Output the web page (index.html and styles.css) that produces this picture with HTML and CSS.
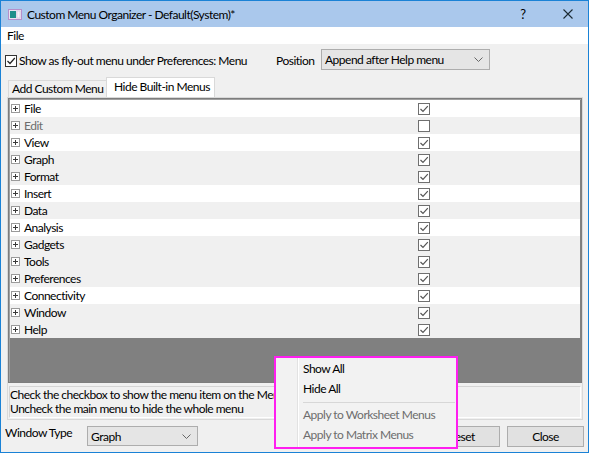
FILE: index.html
```html
<!DOCTYPE html>
<html>
<head>
<meta charset="utf-8">
<link rel="stylesheet" href="styles.css">
</head>
<body>
<div class="window">
  <div class="titlebar">
    <svg class="app-icon" width="14" height="11" viewBox="0 0 14 11">
      <rect x="0.5" y="0.5" width="13" height="10" fill="#e9e3ef" stroke="#b58fca"/>
      <rect x="2" y="2" width="6" height="7" fill="#1f8f8a"/>
      <rect x="9" y="2" width="3" height="7" fill="#f4f1f6" stroke="#c9b3d6" stroke-width="0.5"/>
    </svg>
    <span class="title">Custom Menu Organizer - Default(System)*</span>
    <span class="help">?</span>
    <svg class="close" width="10" height="10" viewBox="0 0 10 10">
      <path d="M0.5 0.5 L9.5 9.5 M9.5 0.5 L0.5 9.5" stroke="#1b2a33" stroke-width="1.1"/>
    </svg>
  </div>
  <div class="menubar">File</div>
  <div class="content">
    <div class="options">
      <label class="flyout">
        <span class="cb cb-main">
          <svg width="10" height="10" viewBox="0 0 10 10"><path d="M1.5 5 L4 7.5 L8.8 2" fill="none" stroke="#222" stroke-width="1.2"/></svg>
        </span>
        <span>Show as fly-out menu under Preferences: Menu</span>
      </label>
      <span class="pos-label">Position</span>
      <div class="select sel-position">
        <span>Append after Help menu</span>
        <svg class="chev" width="9" height="5" viewBox="0 0 9 5"><path d="M0.5 0.5 L4.5 4.5 L8.5 0.5" fill="none" stroke="#666" stroke-width="1"/></svg>
      </div>
    </div>
    <div class="tabs">
      <div class="tab">Add Custom Menu</div>
      <div class="tab active">Hide Built-in Menus</div>
    </div>
    <div class="panel">
      <div class="listbox">
        <div class="row w"><span class="plus"></span><span class="name">File</span><span class="cb cb-list on"></span></div>
        <div class="row g dis"><span class="plus"></span><span class="name">Edit</span><span class="cb cb-list"></span></div>
        <div class="row w"><span class="plus"></span><span class="name">View</span><span class="cb cb-list on"></span></div>
        <div class="row g"><span class="plus"></span><span class="name">Graph</span><span class="cb cb-list on"></span></div>
        <div class="row g"><span class="plus"></span><span class="name">Format</span><span class="cb cb-list on"></span></div>
        <div class="row w"><span class="plus"></span><span class="name">Insert</span><span class="cb cb-list on"></span></div>
        <div class="row g"><span class="plus"></span><span class="name">Data</span><span class="cb cb-list on"></span></div>
        <div class="row w"><span class="plus"></span><span class="name">Analysis</span><span class="cb cb-list on"></span></div>
        <div class="row g"><span class="plus"></span><span class="name">Gadgets</span><span class="cb cb-list on"></span></div>
        <div class="row g"><span class="plus"></span><span class="name">Tools</span><span class="cb cb-list on"></span></div>
        <div class="row g"><span class="plus"></span><span class="name">Preferences</span><span class="cb cb-list on"></span></div>
        <div class="row w"><span class="plus"></span><span class="name">Connectivity</span><span class="cb cb-list on"></span></div>
        <div class="row g"><span class="plus"></span><span class="name">Window</span><span class="cb cb-list on"></span></div>
        <div class="row g"><span class="plus"></span><span class="name">Help</span><span class="cb cb-list on"></span></div>
        <div class="list-fill"></div>
      </div>
      <div class="desc">
        <div>Check the checkbox to show the menu item on the Menu bar</div>
        <div>Uncheck the main menu to hide the whole menu</div>
      </div>
    </div>
    <div class="bottom">
      <span class="wt-label">Window Type</span>
      <div class="select sel-type">
        <span>Graph</span>
        <svg class="chev" width="9" height="5" viewBox="0 0 9 5"><path d="M0.5 0.5 L4.5 4.5 L8.5 0.5" fill="none" stroke="#666" stroke-width="1"/></svg>
      </div>
      <div class="buttons">
        <button class="btn">Reset</button>
        <button class="btn">Close</button>
      </div>
    </div>
  </div>
  <div class="ctxmenu">
    <div class="item">Show All</div>
    <div class="item">Hide All</div>
    <div class="sep"></div>
    <div class="item disabled">Apply to Worksheet Menus</div>
    <div class="item disabled">Apply to Matrix Menus</div>
  </div>
</div>
</body>
</html>
```

FILE: styles.css
```css
* { box-sizing: border-box; }
body {
  margin: 0;
  font-family: Lato, "Liberation Sans", Arial, sans-serif;
  font-size: 12px;
  letter-spacing: -0.5px;
  color: #000;
  background: #fff;
}
.window {
  position: relative;
  width: 589px;
  height: 453px;
  border: 1px solid #1a82d6;
  background: #f0f0f0;
  display: flex;
  flex-direction: column;
  white-space: nowrap;
}
.titlebar {
  height: 26px;
  background: #aac8ec;
  display: flex;
  align-items: center;
  padding-left: 7px;
  flex-shrink: 0;
}
.app-icon { margin-right: 5px; margin-top: 1px; }
.title { flex: 1; }
.help { width: 20px; text-align: center; font-size: 13px; margin-right: 30px; }
.close { margin-right: 15px; }
.menubar {
  height: 17px;
  background: #fff;
  padding-left: 6px;
  line-height: 17px;
  flex-shrink: 0;
}
.content {
  flex: 1;
  padding: 6px 4px 0 4px;
  display: flex;
  flex-direction: column;
}
.options {
  height: 21px;
  display: flex;
  align-items: center;
}
.flyout {
  width: 271px;
  display: flex;
  align-items: center;
  gap: 2px;
}
.cb {
  display: inline-flex;
  align-items: center;
  justify-content: center;
  background: #fff;
}
.cb-main {
  width: 12px;
  height: 12px;
  border: 1px solid #333;
}
.pos-label { width: 45px; }
.select {
  display: flex;
  align-items: center;
  justify-content: space-between;
  background: #e5e5e5;
  border: 1px solid #adadad;
  padding: 0 6px 0 3px;
}
.sel-position { width: 169px; height: 21px; margin-top: -2px; }
.tabs {
  margin-top: 6px;
  height: 20px;
  display: flex;
  align-items: flex-end;
  padding-left: 3px;
}
.tab {
  height: 17px;
  padding: 0 0 0 3px;
  width: 99px;
  border: 1px solid #d9d9d9;
  border-bottom: none;
  line-height: 16px;
  background: #f0f0f0;
}
.tab.active {
  height: 20px;
  width: 109px;
  margin-left: -1px;
  padding-left: 7px;
  background: #fff;
  line-height: 17px;
}
.panel {
  margin-left: 2px;
  width: 576px;
  border: 1px solid #d9d9d9;
  background: #f0f0f0;
  padding-bottom: 1px;
}
.listbox {
  border: 1px solid #7d7d7d;
  box-shadow: inset 1px 1px 0 #a0a0a0;
  padding: 1px;
  height: 285px;
  display: flex;
  flex-direction: column;
  background: #808080;
}
.row {
  height: 17px;
  display: flex;
  align-items: center;
  padding-left: 1px;
  flex-shrink: 0;
}
.row.w { background: #fff; }
.row.g { background: #f0f0f0; }
.row.dis .name { color: #6d6d6d; }
.plus {
  width: 9px;
  height: 9px;
  border: 1px solid #9a9a9a;
  background: #fff;
  position: relative;
  margin-right: 4px;
  flex-shrink: 0;
}
.plus::before, .plus::after {
  content: "";
  position: absolute;
  background: #3a3a3a;
}
.plus::before { left: 1px; top: 3px; width: 5px; height: 1px; }
.plus::after { left: 3px; top: 1px; width: 1px; height: 5px; }
.name { width: 394px; }
.cb-list {
  width: 12px;
  height: 12px;
  border: 1px solid #6f6f6f;
}
.cb-list.on {
  background: #fff url("data:image/svg+xml;utf8,<svg xmlns='http://www.w3.org/2000/svg' width='10' height='10' viewBox='0 0 10 10'><path d='M1.5 5 L4 7.5 L8.8 2.2' fill='none' stroke='%23555' stroke-width='1.2'/></svg>") center/10px 10px no-repeat;
}
.list-fill { flex: 1; background: #808080; }
.desc {
  margin: 3px 1px 0 1px;
  height: 32px;
  border: 1px solid #fff;
  border-top-color: #d4d4d4;
  border-left-color: #d4d4d4;
  padding: 1px 0 0 0;
  line-height: 14px;
  overflow: hidden;
}
.bottom {
  margin-top: 5px;
  height: 22px;
  display: flex;
  align-items: center;
}
.wt-label {
  align-self: flex-start;
  width: 82px;
  line-height: 14px;
  margin-top: 1px;
}
.sel-type { width: 111px; height: 20px; }
.buttons {
  margin-left: auto;
  display: flex;
  gap: 7px;
}
.btn {
  width: 77px;
  height: 21px;
  font: inherit;
  letter-spacing: inherit;
  color: #000;
  background: #e1e1e1;
  border: 1px solid #adadad;
  padding: 0;
}
.ctxmenu {
  position: absolute;
  left: 273px;
  top: 355px;
  width: 184px;
  height: 93px;
  border: 2px solid #ff1ef0;
  background: #f2f2f2 linear-gradient(to right, transparent 21px, #e2e2e2 21px, #e2e2e2 22px, #fff 22px, #fff 23px, transparent 23px);
  padding: 1px 0 2px 0;
}
.item {
  height: 20px;
  line-height: 20px;
  padding-left: 27px;
}
.item.disabled { color: #6d6d6d; }
.sep {
  height: 6px;
  margin-left: 27px;
  margin-right: 1px;
  position: relative;
}
.sep::after {
  content: "";
  position: absolute;
  left: 0; right: 0; top: 3px;
  height: 1px;
  background: #d7d7d7;
}
```
